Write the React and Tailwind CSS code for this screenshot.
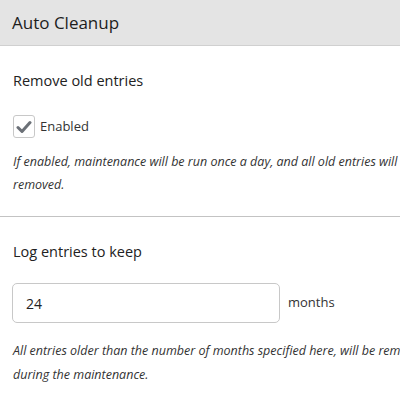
import React from 'react';

// Auto cleanup settings panel
const App = () => {
  return (
    <div className="w-[400px] h-[400px] overflow-hidden bg-white text-[#222] font-['Open_Sans','Noto_Sans',sans-serif]">
      {/* Header */}
      <div className="h-[46px] bg-[#e4e4e4] border-b border-[#d0d0d0] flex items-center px-3">
        <h2 className="text-[17px] text-[#1d1d1d] whitespace-nowrap">Auto Cleanup</h2>
      </div>

      {/* Remove old entries */}
      <div className="px-3 pt-[24px] pb-[20px] border-b border-[#c3c3c3]">
        <h3 className="text-[14.5px] leading-[22px] text-[#222] pl-px">Remove old entries</h3>
        <label className="mt-[23px] flex items-center gap-[5px] pl-px">
          <span className="w-[22px] h-[23px] rounded-[3px] border border-[#c8c8c8] flex items-center justify-center bg-white">
            <svg width="16" height="14" viewBox="0 0 16 14" fill="none">
              <path d="M2 7.5l4 4L14 2.5" stroke="#6b7077" strokeWidth="3" strokeLinecap="round" strokeLinejoin="round" />
            </svg>
          </span>
          <span className="text-[13px] text-[#333]">Enabled</span>
        </label>
        <p className="mt-[12px] text-[12.5px] leading-[23px] italic text-[#333] whitespace-nowrap pl-px">
          If enabled, maintenance will be run once a day, and all old entries will be
          <br />
          removed.
        </p>
      </div>

      {/* Log entries to keep */}
      <div className="px-3 pt-[24px]">
        <h3 className="text-[14.5px] leading-[22px] text-[#222] pl-px">Log entries to keep</h3>
        <div className="mt-[20px] flex items-center gap-[8px]">
          <div className="w-[268px] h-[40px] rounded-[5px] border border-[#c8c8c8] flex items-center px-[13px] text-[14px] text-[#222]">
            24
          </div>
          <span className="text-[13px] text-[#333]">months</span>
        </div>
        <p className="mt-[16px] text-[12.5px] leading-[24px] italic text-[#333] whitespace-nowrap pl-px">
          All entries older than the number of months specified here, will be removed
          <br />
          during the maintenance.
        </p>
      </div>
    </div>
  );
};

export default App;
